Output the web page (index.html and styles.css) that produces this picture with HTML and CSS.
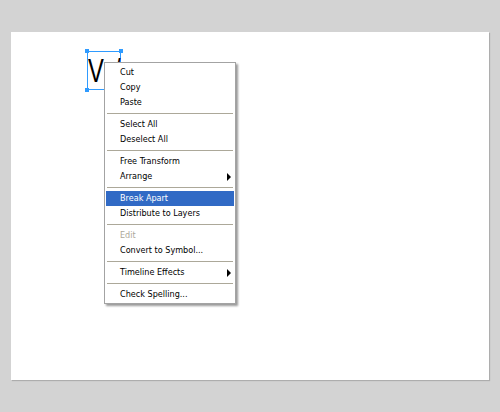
FILE: index.html
```html
<!DOCTYPE html>
<html lang="en">
<head>
    <meta charset="UTF-8">
    <meta name="viewport" content="width=device-width, initial-scale=1.0">
    <title>Break Apart</title>
    <link rel="stylesheet" href="styles.css">
</head>
<body>
    <div class="stage">
        <div class="canvas">
            <div class="selection">
                <span class="glyphs">V/</span>
                <span class="handle top-left"></span>
                <span class="handle top-right"></span>
                <span class="handle bottom-left"></span>
                <span class="handle bottom-right"></span>
            </div>

            <ul class="context-menu">
                <li>Cut</li>
                <li>Copy</li>
                <li>Paste</li>
                <li class="sep"></li>
                <li>Select All</li>
                <li>Deselect All</li>
                <li class="sep"></li>
                <li>Free Transform</li>
                <li class="has-sub">Arrange</li>
                <li class="sep"></li>
                <li class="active">Break Apart</li>
                <li>Distribute to Layers</li>
                <li class="sep"></li>
                <li class="disabled">Edit</li>
                <li>Convert to Symbol...</li>
                <li class="sep"></li>
                <li class="has-sub">Timeline Effects</li>
                <li class="sep"></li>
                <li>Check Spelling...</li>
            </ul>
        </div>
    </div>
</body>
</html>
```

FILE: styles.css
```css
:root {
    --stage: #d3d3d3;
    --handle: #2f9bff;
    --menu-border: #a3a3a3;
    --menu-line: #aca899;
    --highlight: #316ac5;
    --disabled: #aca899;
}

* {
    margin: 0;
    padding: 0;
    box-sizing: border-box;
}

body {
    background: var(--stage);
    min-height: 100vh;
}

.stage {
    padding: 32px 11px;
}

.canvas {
    position: relative;
    height: 348px;
    background: #fff;
    box-shadow: 1px 1px 1px rgba(0, 0, 0, 0.18);
}

/* selected text block */
.selection {
    position: absolute;
    left: 76px;
    top: 19px;
    width: 34px;
    height: 39px;
    border: 1px solid var(--handle);
}

.glyphs {
    display: block;
    font-family: 'Liberation Sans', Arial, sans-serif;
    font-size: 33px;
    line-height: 37px;
    letter-spacing: 14px;
    color: #000;
    white-space: nowrap;
    transform: scaleX(0.72);
    transform-origin: 0 0;
}

.handle {
    position: absolute;
    width: 4px;
    height: 4px;
    background: var(--handle);
}

.top-left { left: -3px; top: -3px; }
.top-right { right: -3px; top: -3px; }
.bottom-left { left: -3px; bottom: -3px; }
.bottom-right { right: -3px; bottom: -3px; }

/* context menu */
.context-menu {
    position: absolute;
    left: 93px;
    top: 30px;
    width: 132px;
    padding: 2px 1px 1px;
    list-style: none;
    background: #fff;
    border: 1px solid var(--menu-border);
    box-shadow: 2px 2px 2px rgba(0, 0, 0, 0.4);
    font-family: 'DejaVu Sans Condensed', 'Liberation Sans', sans-serif;
    font-size: 9px;
    color: #000;
}

.context-menu li {
    position: relative;
    height: 15px;
    line-height: 15px;
    padding-left: 14px;
    white-space: nowrap;
}

.context-menu .sep {
    height: 1px;
    margin: 3px 1px;
    padding: 0;
    background: var(--menu-line);
}

.context-menu .active {
    background: var(--highlight);
    color: #fff;
}

.context-menu .disabled {
    color: var(--disabled);
}

.has-sub::after {
    content: '';
    position: absolute;
    right: 3px;
    top: 4px;
    border-left: 4px solid #000;
    border-top: 4px solid transparent;
    border-bottom: 4px solid transparent;
}
```
